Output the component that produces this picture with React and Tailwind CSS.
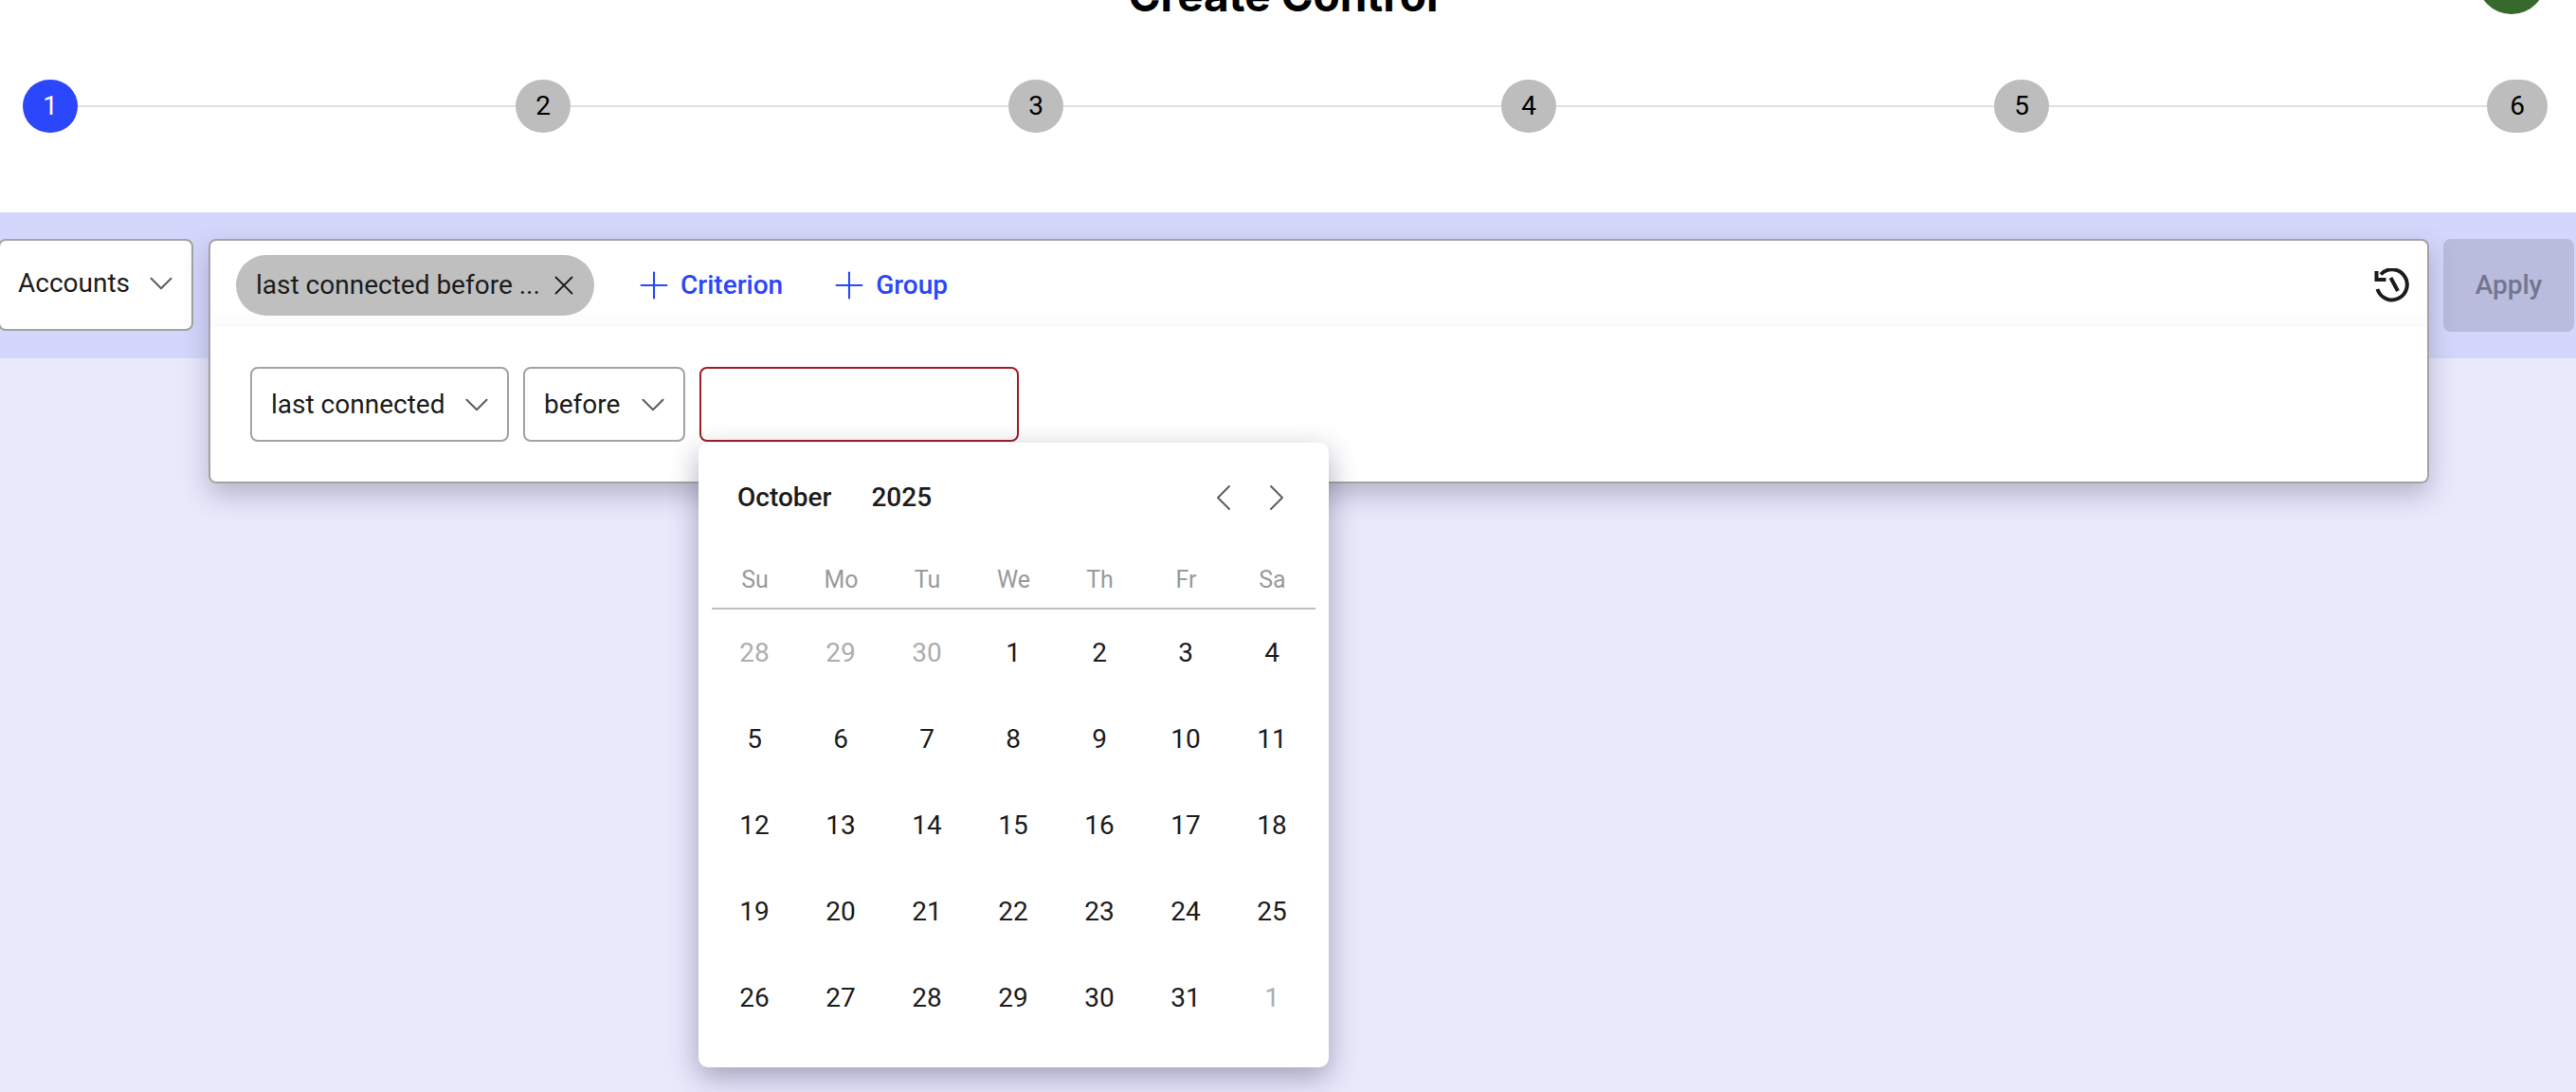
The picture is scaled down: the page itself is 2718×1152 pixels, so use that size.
import { ChevronDown, ChevronLeft, ChevronRight, Plus, X } from 'lucide-react';

const steps = [1, 2, 3, 4, 5, 6];
const weekDays = ['Su', 'Mo', 'Tu', 'We', 'Th', 'Fr', 'Sa'];
const days = [
  [28, true], [29, true], [30, true],
  ...Array.from({ length: 31 }, (_, i) => [i + 1, false]),
  [1, true],
];

function Select({ label, className }) {
  return (
    <div className={`flex items-center justify-between bg-white border-2 border-[#a3a3a3] rounded-lg text-[#1c1c1c] ${className}`}>
      <span>{label}</span>
      <ChevronDown size={42} strokeWidth={1.2} className="text-[#5f5f5f] shrink-0" />
    </div>
  );
}

function HistoryIcon() {
  return (
    <svg width="37" height="37" viewBox="0 0 37 37" fill="none" stroke="#1c1c1c" strokeWidth="4">
      <path d="M3.5 22A16 16 0 1 0 7 6.5" />
      <path d="M2.5 3v9h10" />
      <path d="M17.5 10l7.5 14" />
    </svg>
  );
}

export default function App() {
  return (
    <div className="relative h-[1152px] w-[2718px] overflow-hidden bg-white font-['Roboto',sans-serif] text-[28px]">
      {/* Page title, scrolled mostly out of view */}
      <div className="relative h-[84px]">
        <h1 className="absolute left-0 right-[10px] bottom-[65px] text-center text-[46px] leading-[48px] font-bold text-black font-['Inter',sans-serif]">Create Control</h1>
        <div className="absolute left-[2614px] top-[-57px] w-[72px] h-[72px] rounded-full bg-[#38692c]" />
      </div>

      {/* Stepper */}
      <div className="flex items-center pl-[24px] h-[56px]">
        {steps.map((n, i) => (
          <div key={n} className="flex items-center">
            <div className={`flex items-center justify-center h-[56px] rounded-full ${n === 1 ? 'bg-[#2b47fb] text-white' : 'bg-[#bdbdbd] text-black'} ${n === 6 ? 'w-[64px]' : 'w-[58px]'}`}>
              {n}
            </div>
            {i < 5 && <div className="w-[462px] h-[2px] bg-[#e0e0e0]" />}
          </div>
        ))}
      </div>

      <div className="h-[84px]" />

      {/* Filter band */}
      <div className="bg-[#e8e9fb] h-[928px]">
        <div className="relative h-[154px] bg-[#d4d7fb] pt-[28px]">
          <div className="flex items-start ml-[-2px]">
            <Select label="Accounts" className="w-[206px] h-[97px] pl-[19px] pr-[11px] pb-[4px]" />
            <div className="relative ml-[16px] w-[2343px] h-[258px] shadow-[0_12px_28px_rgba(60,60,90,0.3)] rounded-lg">
              <div className="flex items-center justify-between h-[93px] bg-white bg-gradient-to-b from-white from-80% to-[#fafafa] border-2 border-b-0 border-[#a3a3a3] rounded-t-lg pl-[27px] pr-[19px] pt-[3px]">
                <div className="flex items-center">
                  <div className="flex items-center justify-between w-[378px] h-[64px] rounded-full bg-[#bfbfbf] pl-[21px] pr-[15px] text-[#1c1c1c]">
                    <span className="whitespace-nowrap">last connected before ...</span>
                    <X size={34} strokeWidth={1.25} />
                  </div>
                  <div className="flex items-center gap-[5px] ml-[40px] text-[#2b47fb] font-medium">
                    <Plus size={46} strokeWidth={1.1} />
                    <span>Criterion</span>
                  </div>
                  <div className="flex items-center gap-[5px] ml-[47px] text-[#2b47fb] font-medium">
                    <Plus size={46} strokeWidth={1.1} />
                    <span>Group</span>
                  </div>
                </div>
                <HistoryIcon />
              </div>
              <div className="flex items-start gap-[15px] h-[165px] bg-white border-2 border-t-0 border-[#a3a3a3] rounded-b-lg pt-[42px] pl-[42px]">
                <Select label="last connected" className="w-[273px] h-[79px] pl-[20px] pr-[11px]" />
                <Select label="before" className="w-[171px] h-[79px] pl-[20px] pr-[11px]" />
                <div className="w-[337px] h-[79px] bg-white border-2 border-[#a01c24] rounded-lg" />
              </div>

              {/* Date picker popover */}
              <div className="absolute left-[517px] top-[215px] w-[665px] h-[659px] bg-white rounded-[10px] shadow-[0_10px_30px_rgba(50,50,90,0.4)] px-[14px]">
                <div className="flex items-center justify-between h-[116px] pl-[27px] pr-[17px] font-medium text-[#1c1c1c]">
                  <div className="flex gap-[42px]">
                    <span>October</span>
                    <span>2025</span>
                  </div>
                  <div className="flex items-center gap-[8px] text-[#5f5f5f]">
                    <ChevronLeft size={48} strokeWidth={1} />
                    <ChevronRight size={48} strokeWidth={1} />
                  </div>
                </div>
                <div className="grid grid-cols-7 h-[60px] border-b-2 border-[#bdbdbd] text-[25px] text-[#9a9a9a]">
                  {weekDays.map((d) => (
                    <div key={d} className="flex items-center justify-center">{d}</div>
                  ))}
                </div>
                <div className="grid grid-cols-7 auto-rows-[91px]">
                  {days.map(([d, muted], i) => (
                    <div key={i} className={`flex items-center justify-center pr-[1px] ${muted ? 'text-[#adadad]' : 'text-[#1c1c1c]'}`}>{d}</div>
                  ))}
                </div>
              </div>
            </div>
            <div className="flex items-center justify-center ml-[15px] w-[138px] h-[98px] rounded-lg bg-[#b9bcdc] text-[#74768f] font-medium">Apply</div>
          </div>
        </div>
      </div>
    </div>
  );
}
